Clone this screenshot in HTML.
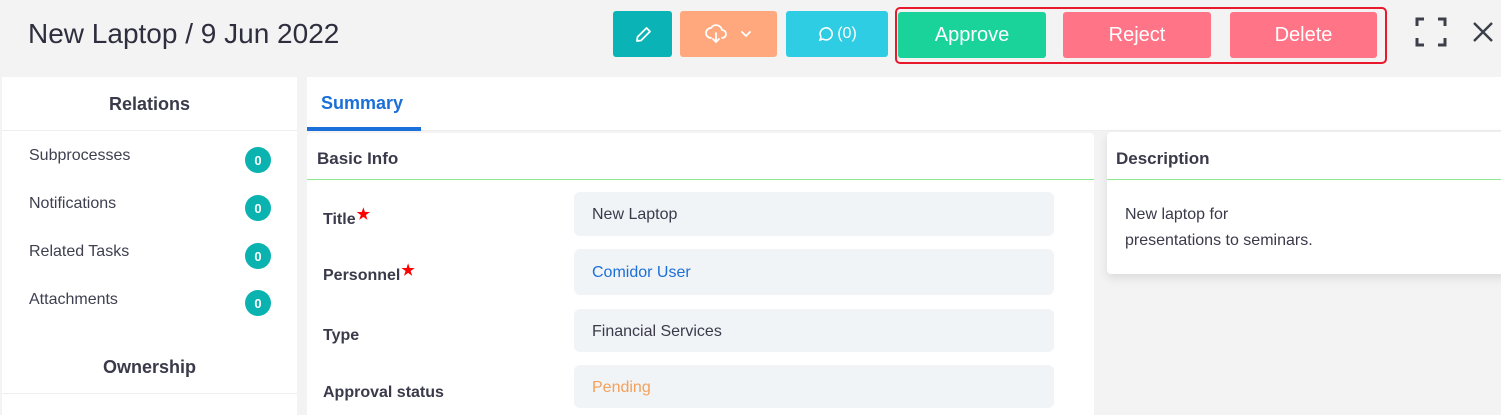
<!DOCTYPE html>
<html><head><style>
*{box-sizing:border-box;margin:0;padding:0}
html,body{width:1501px;height:415px;overflow:hidden}
body{background:#f3f3f3;font-family:"Liberation Sans",sans-serif;color:#3a3a4a;position:relative}
.a{position:absolute}
.btn{position:absolute;top:11px;height:46px;border-radius:3px;color:#fff;font-size:20px;display:flex;align-items:center;justify-content:center}
.lbl{position:absolute;left:323px;font-size:16px;font-weight:bold;color:#3a3a4a}
.inp{position:absolute;left:574px;width:480px;background:#f1f4f7;border-radius:6px;font-size:16px;padding-left:18px;padding-top:2px;display:flex;align-items:center}
.rel{position:absolute;left:29px;font-size:16px;color:#3f3f4f}
.bd{position:absolute;left:245px;width:26px;height:26px;border-radius:50%;background:#0ab3b0;color:#fff;font-size:13px;font-weight:bold;display:flex;align-items:center;justify-content:center}
.star{color:#f00;font-size:15px;position:relative;top:-5px;margin-left:1px}
</style></head><body>
<div class="a" style="left:28px;top:18px;font-size:28px;color:#2e2e3e">New Laptop / 9 Jun 2022</div>
<div class="btn" style="left:613px;width:59px;background:#0ab3b5"><svg width="20" height="20" viewBox="0 0 20 20" fill="none" stroke="#fff" stroke-width="1.8" stroke-linejoin="round"><path d="M4 17l0.5-4 9-9 3.5 3.5-9 9z"/></svg></div>
<div class="btn" style="left:680px;width:97px;background:#ffa87d"><svg width="50" height="22" viewBox="0 0 50 22" fill="none" stroke="#fff" stroke-width="1.8" stroke-linecap="round"><path d="M7 15a5 5 0 0 1 0-10 6 6 0 0 1 11 2 4 4 0 0 1 0 8"/><path d="M12 10v9M9 16l3 3 3-3"/><path d="M38 9l4 4 4-4"/></svg></div>
<div class="btn" style="left:786px;width:102px;background:#2ecde3;font-size:16px"><svg width="16" height="16" viewBox="0 0 16 16" fill="none" stroke="#fff" stroke-width="1.6" style="margin-right:4px"><path d="M3 14l1-3a6 6 0 1 1 2 2z"/></svg>(0)</div>
<div class="a" style="left:895px;top:7px;width:492px;height:57px;border:2px solid #e8192c;border-radius:5px"></div>
<div class="btn" style="left:898px;width:148px;top:12px;background:#19d39a">Approve</div>
<div class="btn" style="left:1063px;width:148px;top:12px;background:#ff7587">Reject</div>
<div class="btn" style="left:1230px;width:147px;top:12px;background:#ff7587">Delete</div>
<svg class="a" style="left:1415px;top:17px" width="32" height="30" viewBox="0 0 32 30" fill="none" stroke="#3a3f4a" stroke-width="3"><path d="M2 9V2h7M23 2h7v7M30 21v7h-7M9 28H2v-7"/></svg>
<svg class="a" style="left:1472px;top:21px" width="22" height="22" viewBox="0 0 22 22" stroke="#3a3f4a" stroke-width="2.4"><path d="M2 2l18 18M20 2L2 20"/></svg>

<div class="a" style="left:2px;top:77px;width:295px;height:340px;background:#fff"></div>
<div class="a" style="left:2px;top:94px;width:295px;text-align:center;font-size:18px;font-weight:bold;color:#3a3a4a">Relations</div>
<div class="a" style="left:2px;top:130px;width:295px;height:1px;background:#eee"></div>
<div class="rel" style="top:147px">Subprocesses</div><div class="bd" style="top:147px">0</div>
<div class="rel" style="top:195px">Notifications</div><div class="bd" style="top:195px">0</div>
<div class="rel" style="top:243px">Related Tasks</div><div class="bd" style="top:243px">0</div>
<div class="rel" style="top:291px">Attachments</div><div class="bd" style="top:290px">0</div>
<div class="a" style="left:2px;top:357px;width:295px;text-align:center;font-size:18px;font-weight:bold;color:#3a3a4a">Ownership</div>
<div class="a" style="left:2px;top:393px;width:295px;height:1px;background:#eee"></div>

<div class="a" style="left:307px;top:77px;width:1194px;height:54px;background:#fff;border-bottom:1px solid #eee"></div>
<div class="a" style="left:321px;top:93px;font-size:18px;font-weight:bold;color:#1a6fd8">Summary</div>
<div class="a" style="left:307px;top:127px;width:114px;height:4px;background:#1a6fd8"></div>

<div class="a" style="left:307px;top:133px;width:787px;height:290px;background:#fff;border-radius:4px"></div>
<div class="a" style="left:317px;top:149px;font-size:17px;font-weight:bold">Basic Info</div>
<div class="a" style="left:307px;top:179px;width:787px;height:1px;background:#8ee88e"></div>
<div class="lbl" style="top:210px">Title<span class="star">★</span></div>
<div class="lbl" style="top:266px">Personnel<span class="star">★</span></div>
<div class="lbl" style="top:327px">Type</div>
<div class="lbl" style="top:384px">Approval status</div>
<div class="inp" style="top:192px;height:44px">New Laptop</div>
<div class="inp" style="top:249px;height:46px;color:#1a6fd8">Comidor User</div>
<div class="inp" style="top:309px;height:43px">Financial Services</div>
<div class="inp" style="top:365px;height:43px;color:#f5a05a">Pending</div>

<div class="a" style="left:1107px;top:132px;width:400px;height:142px;background:#fff;border-radius:4px;box-shadow:0 4px 10px rgba(0,0,0,.1)"></div>
<div class="a" style="left:1116px;top:149px;font-size:17px;font-weight:bold">Description</div>
<div class="a" style="left:1107px;top:179px;width:394px;height:1px;background:#8ee88e"></div>
<div class="a" style="left:1125px;top:202px;font-size:16px;line-height:26px">New laptop for<br>presentations to seminars.</div>
</body></html>
